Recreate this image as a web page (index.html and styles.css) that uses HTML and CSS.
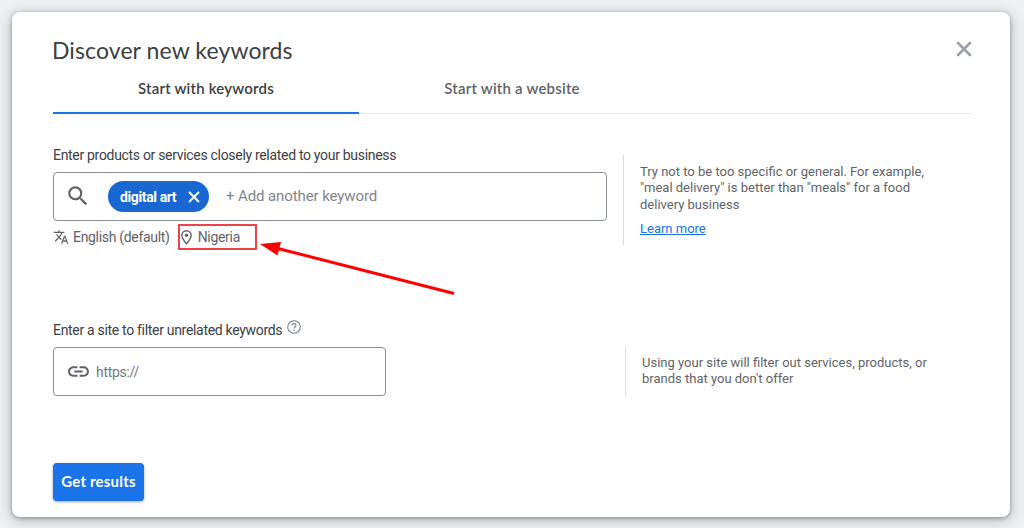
FILE: index.html
```html
<!DOCTYPE html>
<html lang="en">
<head>
  <meta charset="UTF-8">
  <meta name="viewport" content="width=device-width, initial-scale=1.0">
  <title>Discover new keywords</title>
  <link rel="stylesheet" href="styles.css">
</head>
<body>

<div class="card">
  <div class="card-header">
    <h1>Discover new keywords</h1>
    <button class="close" aria-label="Close">
      <svg width="16" height="16" viewBox="0 0 16 16"><path d="M2 2l12 12M14 2L2 14" stroke="#9aa0a6" stroke-width="2.6" stroke-linecap="round"/></svg>
    </button>
  </div>

  <div class="tabs">
    <a class="tab active">Start with keywords</a>
    <a class="tab">Start with a website</a>
  </div>

  <div class="section keywords">
    <div class="field">
      <label>Enter products or services closely related to your business</label>
      <div class="input-box">
        <svg class="search-icon" width="26" height="26" viewBox="0 0 24 24"><path fill="#5f6368" d="M15.5 14h-.79l-.28-.27A6.47 6.47 0 0 0 16 9.5 6.5 6.5 0 1 0 9.5 16c1.61 0 3.09-.59 4.23-1.57l.27.28v.79l5 4.99L20.49 19l-4.99-5zm-6 0C7.01 14 5 11.99 5 9.5S7.01 5 9.5 5 14 7.01 14 9.5 11.99 14 9.5 14z"/></svg>
        <div class="chip">
          <span>digital art</span>
          <svg width="12" height="12" viewBox="0 0 12 12"><path d="M1 1l10 10M11 1L1 11" stroke="#fff" stroke-width="1.9"/></svg>
        </div>
        <span class="add-keyword">+ Add another keyword</span>
      </div>
      <div class="settings">
        <svg class="lang-icon" width="16" height="16" viewBox="0 0 24 24"><path fill="#5f6368" d="M12.87 15.07l-2.54-2.51.03-.03A17.52 17.52 0 0 0 14.07 6H17V4h-7V2H8v2H1v1.99h11.17C11.5 7.92 10.44 9.75 9 11.35 8.07 10.32 7.3 9.19 6.69 8h-2c.73 1.63 1.73 3.17 2.98 4.56l-5.09 5.02L4 19l5-5 3.11 3.11.76-2.04zM18.5 10h-2L12 22h2l1.12-3h4.75L21 22h2l-4.5-12zm-2.62 7l1.62-4.33L19.12 17h-3.24z"/></svg>
        <span class="language">English (default)</span>
        <div class="location">
          <svg width="11" height="15" viewBox="0 0 10 14"><path d="M5 .7C2.6.7.7 2.6.7 4.9.7 8 5 12.9 5 12.9S9.3 8 9.3 4.9C9.3 2.6 7.4.7 5 .7z" fill="none" stroke="#5f6368" stroke-width="1.3"/><circle cx="5" cy="4.9" r="1.6" fill="#5f6368"/></svg>
          <span>Nigeria</span>
          <svg class="arrow" width="196" height="56" viewBox="0 0 196 56"><path d="M18 8.500L194 53.500" stroke="#f00" stroke-width="3"/><path d="M0 4L21 2L17.500 15.500z" fill="#f00"/></svg>
        </div>
      </div>
    </div>
    <div class="hint">
      <p>Try not to be too specific or general. For example,<br>"meal delivery" is better than "meals" for a food<br>delivery business</p>
      <a href="#">Learn more</a>
    </div>
  </div>

  <div class="section site">
    <div class="field">
      <label>Enter a site to filter unrelated keywords
        <svg class="help-icon" width="14" height="14" viewBox="0 0 14 14"><circle cx="7" cy="7" r="6.3" fill="none" stroke="#777b80" stroke-width="1.1"/><path d="M5 5.6C5 4.3 5.8 3.6 7 3.6s2 .8 2 1.8c0 1.3-2 1.5-2 3" fill="none" stroke="#777b80" stroke-width="1.1"/><circle cx="7" cy="10.2" r=".75" fill="#777b80"/></svg>
      </label>
      <div class="input-box">
        <svg class="link-icon" width="25" height="25" viewBox="0 0 24 24"><path fill="#5f6368" d="M3.900 12c0-1.710 1.390-3.100 3.100-3.100h4V7H7c-2.760 0-5 2.240-5 5s2.240 5 5 5h4v-1.900H7c-1.710 0-3.100-1.390-3.100-3.100zM8 13h8v-2H8v2zm9-6h-4v1.900h4c1.710 0 3.100 1.390 3.100 3.100s-1.390 3.100-3.100 3.100h-4V17h4c2.760 0 5-2.240 5-5s-2.240-5-5-5z"/></svg>
        <span class="url">https://</span>
      </div>
    </div>
    <div class="hint">
      <p>Using your site will filter out services, products, or<br>brands that you don't offer</p>
    </div>
  </div>

  <button class="submit">Get results</button>
</div>

</body>
</html>
```
FILE: styles.css
```css
* {
  box-sizing: border-box;
}

body {
  margin: 0;
  padding: 12px 14px 11px 12px;
  height: 528px;
  overflow: hidden;
  background-color: #eff0f2;
  font-family: Roboto, "Liberation Sans", sans-serif;
  font-size: 14px;
  letter-spacing: -0.31px;
  color: #3c4043;
  white-space: nowrap;
}

.card {
  height: 505px;
  padding: 22px 38px 0 41px;
  background-color: #fff;
  border-radius: 8px;
  box-shadow: 0 1px 4px rgba(0, 0, 0, 0.3), 0 3px 14px rgba(0, 0, 0, 0.25);
}

.card-header {
  display: flex;
  justify-content: space-between;
  height: 32px;
}

h1 {
  margin: 0 0 0 -1px;
  font-family: Lato, sans-serif;
  font-size: 23px;
  line-height: 32px;
  font-weight: 400;
  letter-spacing: 0.1px;
}

button {
  border: none;
  font-family: Lato, sans-serif;
  cursor: pointer;
}

.close {
  height: 16px;
  margin-top: 7px;
  padding: 0;
  background: none;
}

.close svg {
  display: block;
}

/* Tabs */
.tabs {
  display: flex;
  height: 48px;
  border-bottom: 1px solid #e4e6e8;
}

.tab {
  width: 306px;
  height: 48px;
  font-family: Lato, sans-serif;
  font-size: 15px;
  font-weight: 600;
  line-height: 44px;
  letter-spacing: 0.2px;
  text-align: center;
  color: #5f6368;
}

.tab.active {
  color: #3c4043;
  border-bottom: 2px solid #1a73e8;
}

/* Form sections */
.section {
  display: flex;
  justify-content: space-between;
}

.keywords {
  height: 174px;
  padding-top: 32px;
}

.site {
  height: 175px;
  padding-top: 33px;
}

label {
  display: flex;
  height: 26px;
  line-height: 18px;
}

.input-box {
  display: flex;
  align-items: center;
  height: 49px;
  border: 1px solid #8b9096;
  border-radius: 4px;
}

.keywords .input-box {
  width: 554px;
}

.site .input-box {
  width: 333px;
}

.search-icon {
  margin: -2px 0 0 11px;
}

.chip {
  display: flex;
  align-items: center;
  justify-content: space-between;
  width: 101px;
  height: 31px;
  margin-left: 17px;
  padding: 0 9px 0 12px;
  border-radius: 16px;
  background-color: #1967d2;
  color: #fff;
  font-weight: 700;
  letter-spacing: -0.38px;
}

.add-keyword {
  margin: -2px 0 0 17px;
  font-size: 15px;
  letter-spacing: -0.1px;
  color: #80868b;
}

.settings {
  display: flex;
  align-items: center;
  height: 26px;
  margin-top: 3px;
  color: #5f6368;
}

.language {
  margin-left: 4px;
}

.location {
  position: relative;
  display: flex;
  align-items: center;
  width: 79px;
  height: 26px;
  margin-left: 8px;
  padding-left: 1px;
  border: 2px solid #f04048;
}

.location span {
  margin-left: 6px;
}

/* Arrow pointing at the location */
.arrow {
  position: absolute;
  left: 80px;
  top: 14px;
}

.hint {
  width: 349px;
  padding-left: 16px;
  border-left: 1px solid #dadce0;
  font-size: 13px;
  line-height: 16.3px;
  letter-spacing: 0;
  color: #5f6368;
}

.hint p {
  margin: 0;
}

.keywords .hint {
  height: 90px;
  margin-top: 9px;
  padding-top: 9px;
}

.keywords .hint a {
  display: inline-block;
  margin-top: 8px;
  color: #1a73e8;
}

.site .hint {
  width: 347px;
  height: 49px;
  margin-top: 26px;
  padding-top: 8px;
}

.help-icon {
  margin: -1px 0 0 5px;
}

.link-icon {
  margin-left: 12px;
}

.url {
  margin-left: 5px;
  color: #74787c;
}

.submit {
  width: 91px;
  height: 38px;
  padding: 0 0 2px;
  border-radius: 4px;
  background-color: #1a73e8;
  box-shadow: 0 1px 3px rgba(0, 0, 0, 0.35);
  color: #fff;
  font-size: 15px;
  font-weight: 700;
  letter-spacing: 0.2px;
}
```
